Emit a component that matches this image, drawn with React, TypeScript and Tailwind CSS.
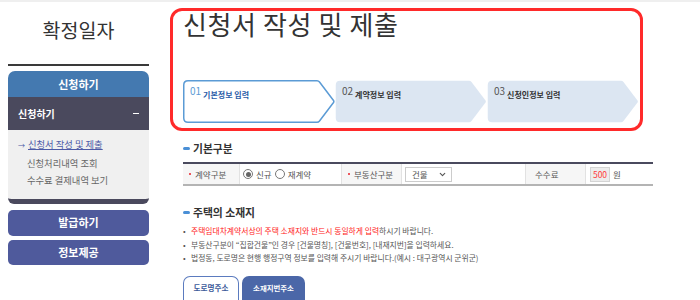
import React from 'react';
import { ChevronDown } from 'lucide-react';

const ko = "font-['Noto_Sans_CJK_KR',sans-serif]";

function StepShape({ active }: { active: boolean }) {
  return (
    <svg className="absolute inset-0" width="152" height="43" viewBox="0 0 152 43">
      <path
        d="M5 0.75 H134 Q135.5 0.75 136.5 2 L150.5 20.5 Q151.2 21.5 150.5 22.5 L136.5 41 Q135.5 42.25 134 42.25 H5 Q0.75 42.25 0.75 38 V5 Q0.75 0.75 5 0.75 Z"
        fill={active ? '#ffffff' : '#dce6f2'}
        stroke={active ? '#5b9bd5' : 'none'}
        strokeWidth={active ? 1.5 : 0}
      />
    </svg>
  );
}

function Step({ no, label, active }: { no: string; label: string; active?: boolean }) {
  return (
    <div className="relative w-[152px] h-[43px] shrink-0">
      <StepShape active={!!active} />
      <div className="relative flex items-start pl-[7px] pt-[5px]">
        <span className={`text-[10px] leading-[12px] ${active ? 'text-[#5b9bd5]' : 'text-[#555]'}`}>{no}</span>
        <span className={`ml-[2px] mt-[5px] text-[8px] leading-[10px] font-bold ${active ? 'text-[#2a5ca8]' : 'text-[#333]'}`}>{label}</span>
      </div>
    </div>
  );
}

function SectionTitle({ children }: { children: React.ReactNode }) {
  return (
    <div className="flex items-center h-[14px]">
      <span className="w-[7px] h-[3px] rounded-full bg-[#4a8fd6]" />
      <span className="ml-[3px] text-[10.8px] leading-[14px] font-bold text-[#333]">{children}</span>
    </div>
  );
}

function Label({ children, dot = true }: { children: React.ReactNode; dot?: boolean }) {
  return (
    <div className="flex items-center bg-[#f6f6f6] border-r border-[#e2e2e2] pl-[6px] text-[8.5px] text-[#555]">
      {dot && <span className="w-[2px] h-[2px] rounded-full bg-[#e8202a] mr-[4px]" />}
      {children}
    </div>
  );
}

function Radio({ checked }: { checked?: boolean }) {
  return (
    <span className="w-[10px] h-[10px] rounded-full border border-[#777] bg-white flex items-center justify-center">
      {checked && <span className="w-[5px] h-[5px] rounded-full bg-[#666]" />}
    </span>
  );
}

export default function App() {
  return (
    <div className={`w-[700px] h-[300px] overflow-hidden bg-white ${ko}`}>
      <div className="h-[2px] bg-[#efefef]" />
      <div className="flex">
        {/* Sidebar */}
        <aside className="ml-[8px] w-[141px] shrink-0">
          <h1 className="mt-[16px] text-center text-[19.5px] leading-[24px] text-[#333]">확정일자</h1>
          <div className="mt-[22px] h-[2px] bg-[#3a3a3a]" />
          <div className="mt-[5px] h-[26px] rounded-t-[7px] bg-[#4479b0] flex items-center justify-center text-[11px] font-bold text-white">
            신청하기
          </div>
          <div className="h-[33px] bg-[#4a495d] flex items-center justify-between pl-[10px] pr-[10px] text-white">
            <span className="text-[10px] font-bold">신청하기</span>
            <span className="w-[6px] h-[1.5px] bg-white" />
          </div>
          <ul className="bg-[#f0f0f0] pt-[6px] pb-[9px] border-b-[5px] border-[#4a495d] rounded-b-[6px] text-[9.3px] leading-[17.5px]">
            <li className="pl-[10px] text-[#4d5aa6]">
              <span className="text-[7px] mr-[3px]">→</span>
              <span className="underline">신청서 작성 및 제출</span>
            </li>
            <li className="pl-[19px] text-[#666]">신청처리내역 조회</li>
            <li className="pl-[19px] text-[#666]">수수료 결제내역 보기</li>
          </ul>
          <div className="mt-[6px] h-[26px] rounded-[5px] bg-[#4f5a9c] flex items-center justify-center text-[11px] font-bold text-white">
            발급하기
          </div>
          <div className="mt-[4px] h-[25px] rounded-[5px] bg-[#4f5a9c] flex items-center justify-center text-[11px] font-bold text-white">
            정보제공
          </div>
        </aside>

        {/* Main */}
        <main className="ml-[21px] flex-1">
          <div className="mt-[6px] w-[473px] rounded-[12px] border-[3px] border-[#ff2a2a] pl-[10px] pb-[5px]">
            <h2 className="-mt-[1px] text-[26px] leading-[28px] tracking-[0.6px] text-[#333]">신청서 작성 및 제출</h2>
            <div className="mt-[42px] flex">
              <Step no="01" label="기본정보 입력" active />
              <Step no="02" label="계약정보 입력" />
              <Step no="03" label="신청인정보 입력" />
            </div>
          </div>

          <div className="pl-[13px]">
            <div className="mt-[10px]">
              <SectionTitle>기본구분</SectionTitle>
            </div>
            <div className="mt-[7px] w-[470px] border-t-2 border-b-2 border-t-[#4a4a5e] border-b-[#b4b4b4] grid grid-cols-[57px_102px_60px_124px_60px_67px] h-[24px]">
              <Label>계약구분</Label>
              <div className="flex items-center pl-[3px] gap-[3px] text-[8.5px] text-[#555] border-r border-[#e2e2e2]">
                <Radio checked />
                <span>신규</span>
                <Radio />
                <span>재계약</span>
              </div>
              <Label>부동산구분</Label>
              <div className="flex items-center pl-[3px] border-r border-[#e2e2e2]">
                <div className="w-[47px] h-[15px] border border-[#ccc] bg-white flex items-center justify-between pl-[6px] pr-[4px] text-[8.5px] text-[#555]">
                  <span>건물</span>
                  <ChevronDown size={9} strokeWidth={3} className="text-[#555]" />
                </div>
              </div>
              <Label dot={false}>
                <span className="pl-[3px]">수수료</span>
              </Label>
              <div className="flex items-center pl-[4px] text-[8.5px] text-[#555]">
                <span className="w-[20px] h-[15px] bg-[#ececec] border border-[#d4d4d4] flex items-center justify-center text-[#ff3b3b]">500</span>
                <span className="ml-[3px]">원</span>
              </div>
            </div>

            <div className="mt-[19px]">
              <SectionTitle>주택의 소재지</SectionTitle>
            </div>
            <ul className="mt-[5px] text-[7.8px] leading-[13.5px] text-[#555]">
              <li className="flex">
                <span className="w-[8px]">•</span>
                <span>
                  <span className="text-[#ff2020]">주택임대차계약서상의 주택 소재지와 반드시 동일하게 입력</span>하시기 바랍니다.
                </span>
              </li>
              <li className="flex">
                <span className="w-[8px]">•</span>
                <span>부동산구분이 “집합건물”인 경우 [건물명칭], [건물번호], [내재지번]을 입력하세요.</span>
              </li>
              <li className="flex">
                <span className="w-[8px]">•</span>
                <span>법정동, 도로명은 현행 행정구역 정보를 입력해 주시기 바랍니다.(예시 : 대구광역시 군위군)</span>
              </li>
            </ul>

            <div className="mt-[11px] flex gap-[3px]">
              <div className="w-[56px] h-[26px] rounded-t-[7px] border-[1.5px] border-b-0 border-[#5b7bbf] bg-white flex justify-center pt-[5px] text-[7.6px] font-bold text-[#3c5a9a]">
                도로명주소
              </div>
              <div className="w-[63px] h-[26px] rounded-t-[7px] bg-[#4b67a8] flex justify-center pt-[6px] text-[7.4px] font-bold text-white">
                소재지번주소
              </div>
            </div>
          </div>
        </main>
      </div>
    </div>
  );
}
